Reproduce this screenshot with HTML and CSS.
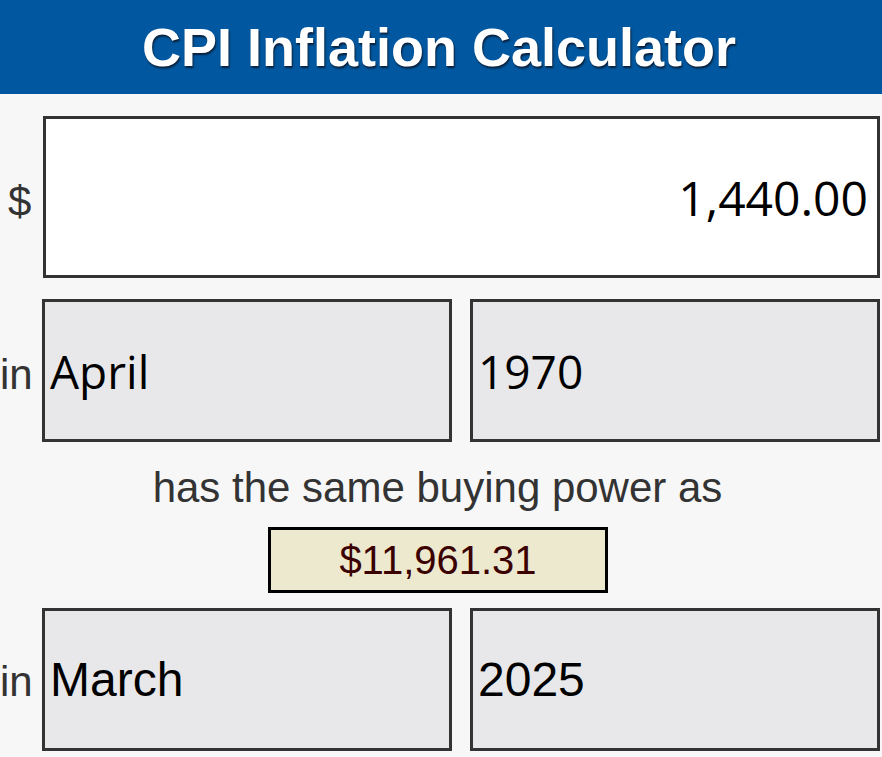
FILE: index.html
```html
<!DOCTYPE html>
<html lang="en">
<head>
<meta charset="utf-8">
<title>CPI Inflation Calculator</title>
<link rel="stylesheet" href="styles.css">
</head>
<body>
<header class="banner">
  <h1 class="title">CPI Inflation Calculator</h1>
</header>
<main class="calc">
  <div class="row row-amount">
    <span class="label">$</span>
    <div class="field field-amount">1,440.00</div>
  </div>
  <div class="row row-date">
    <span class="label">in</span>
    <div class="field field-select field-open">April</div>
    <div class="field field-select field-open">1970</div>
  </div>
  <p class="phrase">has the same buying power as</p>
  <div class="result-wrap">
    <div class="result">$11,961.31</div>
  </div>
  <div class="row row-date row-last">
    <span class="label">in</span>
    <div class="field field-select field-arial">March</div>
    <div class="field field-select field-arial">2025</div>
  </div>
</main>
</body>
</html>
```

FILE: styles.css
```css
html, body {
  margin: 0;
  padding: 0;
  background: #f7f7f7;
}

body {
  font-family: "Liberation Sans", Arial, sans-serif;
  color: #333;
  overflow: hidden;
}

.banner {
  background: #0158a0;
  height: 94px;
  display: flex;
  align-items: center;
  justify-content: center;
  padding-right: 4px;
}

.title {
  margin: 0;
  font-family: "Liberation Sans", Arial, sans-serif;
  font-weight: bold;
  font-size: 54px;
  color: #fff;
  text-shadow: 1px 2px 2px #0a1f3a;
}

.calc {
  display: flex;
  flex-direction: column;
  padding-top: 22px;
}

.row {
  display: flex;
  align-items: baseline;
  padding-right: 2px;
}

.row-date {
  margin-top: 21px;
  gap: 18px;
}

.row-last {
  margin-top: 15px;
}

.label {
  flex: none;
  font-size: 42px;
  color: #333;
}

.row-amount .label {
  width: 23px;
  padding-left: 8px;
  margin-right: 12px;
}

.row-date .label {
  width: 28px;
  margin-right: -4px;
}

.field {
  box-sizing: border-box;
  border: 3px solid #333;
  display: flex;
  align-items: center;
  color: #000;
}

.field-amount {
  flex: 1;
  height: 162px;
  background: #fff;
  justify-content: flex-end;
  padding-right: 9px;
  font-family: "Open Sans", "Noto Sans", sans-serif;
  font-size: 48px;
}

.field-select {
  flex: 1;
  height: 143px;
  background: #e8e8ea;
  padding-left: 5px;
}

.field-open {
  font-family: "Open Sans", "Noto Sans", sans-serif;
  font-size: 46px;
}

.field-arial {
  font-family: "Liberation Sans", Arial, sans-serif;
  font-size: 48px;
}

.phrase {
  margin: 21px 0 0;
  padding-right: 7px;
  text-align: center;
  font-size: 42px;
  line-height: 50px;
  color: #333;
}

.result-wrap {
  display: flex;
  justify-content: center;
  margin-top: 14px;
  padding-right: 6px;
}

.result {
  box-sizing: border-box;
  width: 340px;
  height: 66px;
  border: 3px solid #000;
  background: #ede9ce;
  color: #3b0000;
  font-size: 40px;
  line-height: 60px;
  text-align: center;
}
```
